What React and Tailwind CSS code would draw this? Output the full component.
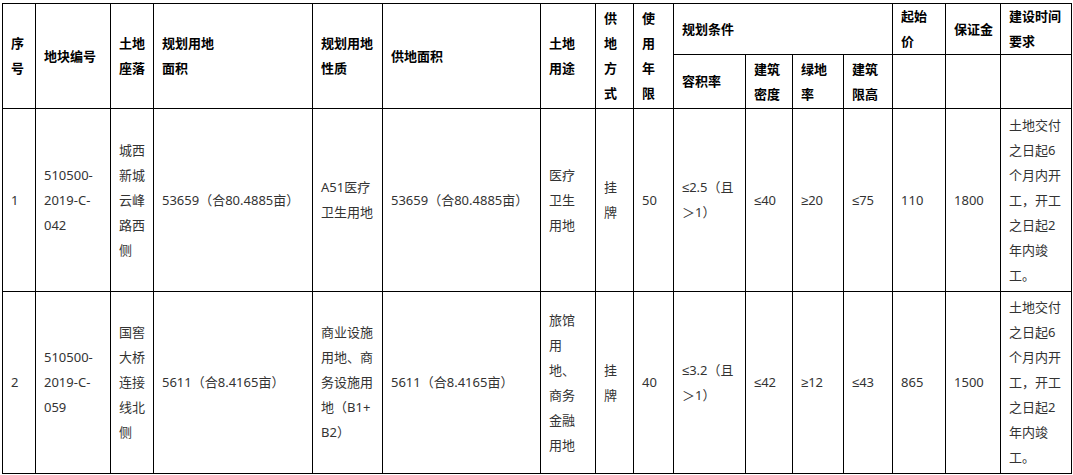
import React from 'react';

const cols = [33, 75, 43, 159, 70, 158, 55, 38, 40, 72, 47, 51, 49, 53, 55, 71];
const colClass = [
  'w-[33px]', 'w-[75px]', 'w-[43px]', 'w-[159px]', 'w-[70px]', 'w-[158px]', 'w-[55px]', 'w-[38px]',
  'w-[40px]', 'w-[72px]', 'w-[47px]', 'w-[51px]', 'w-[49px]', 'w-[53px]', 'w-[55px]', 'w-[71px]',
];

const rows = [
  {
    no: ['1'],
    code: ['510500-', '2019-C-', '042'],
    place: ['城西', '新城', '云峰', '路西', '侧'],
    area: ['53659（合80.4885亩）'],
    nature: ['A51医疗', '卫生用地'],
    supply: ['53659（合80.4885亩）'],
    use: ['医疗', '卫生', '用地'],
    way: ['挂', '牌'],
    years: ['50'],
    far: ['≤2.5（且', '＞1）'],
    density: ['≤40'],
    green: ['≥20'],
    height: ['≤75'],
    price: ['110'],
    deposit: ['1800'],
    time: ['土地交付', '之日起6', '个月内开', '工，开工', '之日起2', '年内竣', '工。'],
  },
  {
    no: ['2'],
    code: ['510500-', '2019-C-', '059'],
    place: ['国窖', '大桥', '连接', '线北', '侧'],
    area: ['5611（合8.4165亩）'],
    nature: ['商业设施', '用地、商', '务设施用', '地（B1+', 'B2）'],
    supply: ['5611（合8.4165亩）'],
    use: ['旅馆', '用', '地、', '商务', '金融', '用地'],
    way: ['挂', '牌'],
    years: ['40'],
    far: ['≤3.2（且', '＞1）'],
    density: ['≤42'],
    green: ['≥12'],
    height: ['≤43'],
    price: ['865'],
    deposit: ['1500'],
    time: ['土地交付', '之日起6', '个月内开', '工，开工', '之日起2', '年内竣', '工。'],
  },
];

const keys = ['no', 'code', 'place', 'area', 'nature', 'supply', 'use', 'way', 'years', 'far', 'density', 'green', 'height', 'price', 'deposit', 'time'];

// ≤ and ≥ come out full width in the CJK font, so give them a narrow Latin face
const withSigns = (text) =>
  text.split(/([≤≥])/).map((part, i) =>
    part === '≤' || part === '≥' ? (
      <span key={i} className="font-['Liberation_Sans']">{part}</span>
    ) : (
      part
    )
  );

const Lines = ({ lines }) => (
  <>
    {lines.map((l, i) => (
      <div key={i} className="whitespace-nowrap">{withSigns(l)}</div>
    ))}
  </>
);

const th = 'border border-black pl-2 pr-1 py-0 text-left align-middle font-bold text-black';
const td = 'border border-black pl-2 pr-1 py-0 text-left align-middle text-[#333333]';

export default function App() {
  return (
    <div className="min-h-screen bg-white pl-[2px] pt-[3px]" style={{ fontFamily: '"Noto Sans", "Noto Sans CJK SC", sans-serif' }}>
      <table className="table-fixed border-collapse w-[1069px] text-[13px] leading-[25px]">
        <colgroup>
          {cols.map((w, i) => (
            <col key={i} className={colClass[i]} />
          ))}
        </colgroup>
        <thead>
          <tr className="h-[50px]">
            <th rowSpan={2} className={th}><Lines lines={['序', '号']} /></th>
            <th rowSpan={2} className={th}>地块编号</th>
            <th rowSpan={2} className={th}><Lines lines={['土地', '座落']} /></th>
            <th rowSpan={2} className={th}><Lines lines={['规划用地', '面积']} /></th>
            <th rowSpan={2} className={th}><Lines lines={['规划用地', '性质']} /></th>
            <th rowSpan={2} className={th}>供地面积</th>
            <th rowSpan={2} className={th}><Lines lines={['土地', '用途']} /></th>
            <th rowSpan={2} className={th}><Lines lines={['供', '地', '方', '式']} /></th>
            <th rowSpan={2} className={th}><Lines lines={['使', '用', '年', '限']} /></th>
            <th colSpan={4} className={th}>规划条件</th>
            <th className={th}><Lines lines={['起始', '价']} /></th>
            <th className={th}>保证金</th>
            <th className={th}><Lines lines={['建设时间', '要求']} /></th>
          </tr>
          <tr className="h-[54px]">
            <th className={th}>容积率</th>
            <th className={th}><Lines lines={['建筑', '密度']} /></th>
            <th className={th}><Lines lines={['绿地', '率']} /></th>
            <th className={th}><Lines lines={['建筑', '限高']} /></th>
            <th className={th}></th>
            <th className={th}></th>
            <th className={th}></th>
          </tr>
        </thead>
        <tbody>
          {rows.map((r, i) => (
            <tr key={i} className={i === 0 ? 'h-[183px]' : 'h-[182px]'}>
              {keys.map((k) => (
                <td key={k} className={td}><Lines lines={r[k]} /></td>
              ))}
            </tr>
          ))}
        </tbody>
      </table>
    </div>
  );
}
